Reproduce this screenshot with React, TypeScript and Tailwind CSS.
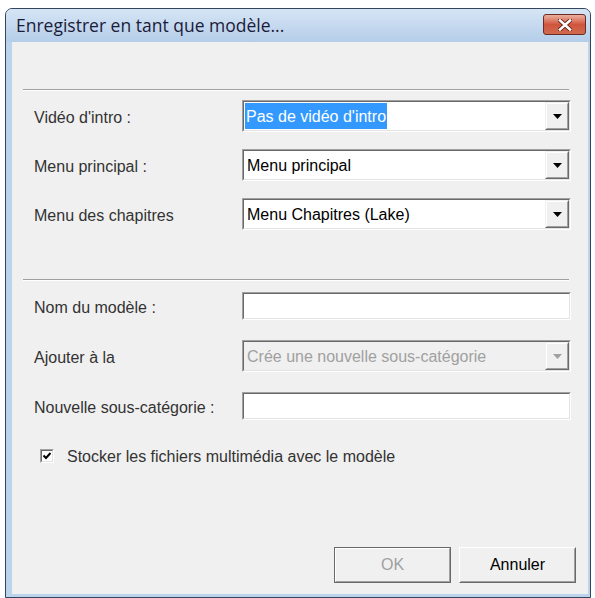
import React from "react";

function Arrow({ disabled }: { disabled?: boolean }) {
  return (
    <svg width="9" height="5" viewBox="0 0 9 5">
      <polygon points="0,0 9,0 4.5,5" fill={disabled ? "#a0a0a0" : "#000"} />
    </svg>
  );
}

function Combo({ text, selected, disabled }: { text: string; selected?: boolean; disabled?: boolean }) {
  return (
    <div className="h-[32px] flex border border-t-[#a0a0a0] border-l-[#a0a0a0] border-b-white border-r-white">
      <div
        className={
          "flex-1 flex border border-t-[#696969] border-l-[#696969] border-b-[#e3e3e3] border-r-[#e3e3e3] " +
          (disabled ? "bg-[#f0f0f0]" : "bg-white")
        }
      >
        <div className="flex-1 flex items-stretch py-[1px] pl-[1px]">
          {selected ? (
            <span className="bg-[#3399ff] text-white flex items-center pl-[1px] pr-[1px] pt-[2px]">{text}</span>
          ) : (
            <span className={"flex items-center pl-[2px] pt-[2px] " + (disabled ? "text-[#a0a0a0]" : "text-black")}>{text}</span>
          )}
        </div>
        <div className="w-[24px] flex border border-t-[#f0f0f0] border-l-[#f0f0f0] border-b-[#696969] border-r-[#696969]">
          <div className="flex-1 flex items-center justify-center bg-[#f0f0f0] border border-t-white border-l-white border-b-[#a0a0a0] border-r-[#a0a0a0]">
            <Arrow disabled={disabled} />
          </div>
        </div>
      </div>
    </div>
  );
}

function TextBox() {
  return (
    <div className="h-[28px] flex border border-t-[#a0a0a0] border-l-[#a0a0a0] border-b-white border-r-white">
      <div className="flex-1 bg-white border border-t-[#696969] border-l-[#696969] border-b-[#e3e3e3] border-r-[#e3e3e3]" />
    </div>
  );
}

function Row({ label, children }: { label: string; children: React.ReactNode }) {
  return (
    <div className="flex items-center">
      <div className="w-[208px] text-[#333] pt-[3px]">{label}</div>
      <div className="flex-1">{children}</div>
    </div>
  );
}

function Separator({ className }: { className?: string }) {
  return <div className={"ml-[11px] mr-[19px] h-[2px] border-t border-t-[#a0a0a0] border-b border-b-white " + (className || "")} />;
}

export default function App() {
  return (
    <div className="w-[595px] h-[598px] bg-white pl-[5px] pt-[8px] overflow-hidden">
      <div className="w-[586px] h-[590px] rounded-t-[7px] border border-[#33465c] bg-[#bcd3ec] flex flex-col">
        <div className="h-[33px] flex items-center justify-between pl-[10px] pr-[4px] rounded-t-[6px] bg-gradient-to-b from-[#d6e5f5] to-[#b4cde9]">
          <span className="font-['Open_Sans',sans-serif] text-[17.5px] text-[#1b1b3a] mt-[-1px]">Enregistrer en tant que modèle...</span>
          <div className="w-[43px] h-[21px] mt-[-2px] rounded-[3px] border border-[#6b2a22] flex items-center justify-center bg-gradient-to-b from-[#eab0a1] via-[#d0553d] to-[#cf6a4f]">
            <svg width="14" height="12" viewBox="0 0 14 12">
              <path d="M2 1.5 L12 10.5 M12 1.5 L2 10.5" stroke="#5a1a12" strokeWidth="4.2" strokeLinecap="square" />
              <path d="M2 1.5 L12 10.5 M12 1.5 L2 10.5" stroke="#fff" strokeWidth="2.6" strokeLinecap="square" />
            </svg>
          </div>
        </div>
        <div className="flex-1 flex pl-[6px] pr-[2px] pb-[3px]">
          <div className="flex-1 bg-[#f0f0f0] flex flex-col font-['Liberation_Sans',Arial,sans-serif] text-[16px] pt-[47px] pb-[11px]">
            <Separator />
            <div className="flex flex-col gap-[17px] pl-[22px] pr-[17px] mt-[9px]">
              <Row label="Vidéo d'intro :">
                <Combo text="Pas de vidéo d'intro" selected />
              </Row>
              <Row label="Menu principal :">
                <Combo text="Menu principal" />
              </Row>
              <Row label="Menu des chapitres">
                <Combo text="Menu Chapitres (Lake)" />
              </Row>
            </div>
            <Separator className="mt-[49px]" />
            <div className="flex flex-col gap-[20px] pl-[22px] pr-[17px] mt-[11px]">
              <Row label="Nom du modèle :">
                <TextBox />
              </Row>
              <Row label="Ajouter à la">
                <Combo text="Crée une nouvelle sous-catégorie" disabled />
              </Row>
              <Row label="Nouvelle sous-catégorie :">
                <TextBox />
              </Row>
            </div>
            <div className="flex items-center gap-[13px] pl-[28px] mt-[23px]">
              <div className="w-[14px] h-[14px] flex border border-t-[#a0a0a0] border-l-[#a0a0a0] border-b-white border-r-white">
                <div className="flex-1 bg-white border border-t-[#696969] border-l-[#696969] border-b-[#e3e3e3] border-r-[#e3e3e3] flex items-center justify-center">
                  <svg width="8" height="8" viewBox="0 0 8 8">
                    <path d="M0.5 3.5 L3 6 L7.5 1" stroke="#000" strokeWidth="2" fill="none" />
                  </svg>
                </div>
              </div>
              <span className="text-[#333] pt-[2px]">Stocker les fichiers multimédia avec le modèle</span>
            </div>
            <div className="flex-1" />
            <div className="flex justify-end gap-[8px] pr-[12px]">
              <div className="w-[117px] h-[36px] border border-[#696969] flex">
                <div className="flex-1 flex items-center justify-center bg-[#f0f0f0] border border-t-white border-l-white border-b-[#a0a0a0] border-r-[#a0a0a0] text-[#a0a0a0]">
                  OK
                </div>
              </div>
              <div className="w-[117px] h-[36px] flex border border-t-white border-l-white border-b-[#696969] border-r-[#696969]">
                <div className="flex-1 flex items-center justify-center bg-[#f0f0f0] border border-t-[#f0f0f0] border-l-[#f0f0f0] border-b-[#a0a0a0] border-r-[#a0a0a0] text-black">
                  Annuler
                </div>
              </div>
            </div>
          </div>
        </div>
      </div>
    </div>
  );
}
